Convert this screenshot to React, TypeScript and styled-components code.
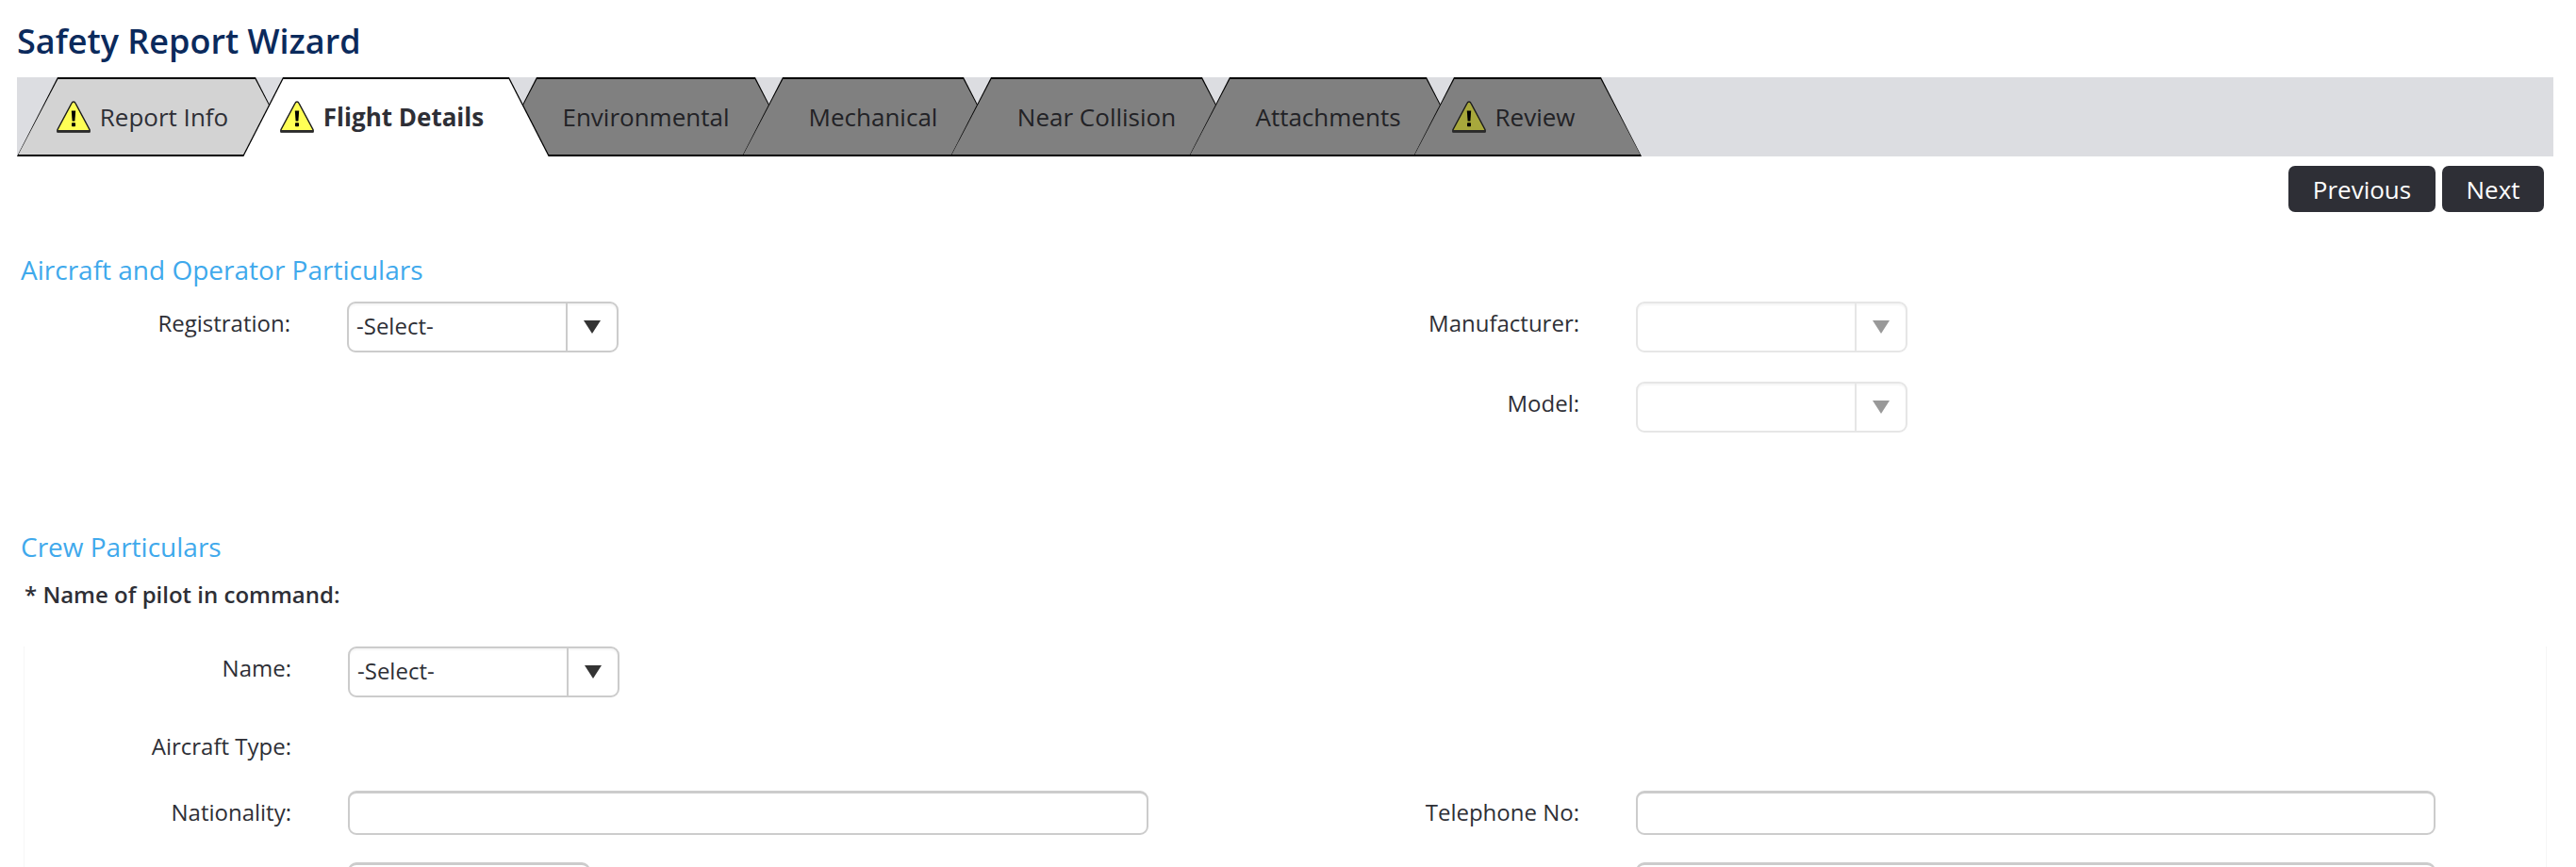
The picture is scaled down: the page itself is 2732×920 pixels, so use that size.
import React from 'react';
import styled, { createGlobalStyle } from 'styled-components';

const GlobalStyle = createGlobalStyle`
  html, body {
    margin: 0;
    height: 920px;
    overflow: hidden;
    background: #fff;
  }

  body {
    font-family: "Open Sans", "Liberation Sans", sans-serif;
    color: #2e2f36;
  }
`;

const Page = styled.div`
  padding: 0 24px 0 18px;
  height: 920px;
  box-sizing: border-box;
  overflow: hidden;
`;

const Title = styled.h1`
  margin: 0;
  height: 82px;
  padding-top: 24px;
  box-sizing: border-box;
  font-size: 36px;
  line-height: 40px;
  font-weight: 600;
  color: #0b2a5c;
`;

const TabBar = styled.div`
  display: flex;
  height: 84px;
  background: #dcdde1;
`;

type TabState = 'done' | 'active' | 'idle';

const tabFill: Record<TabState, string> = {
  done: '#d3d3d3',
  active: '#fff',
  idle: '#808080',
};

const Tab = styled.div<{ $width: number; $state: TabState; $order: number }>`
  position: relative;
  isolation: isolate;
  z-index: ${(p) => (p.$state === 'active' ? 20 : p.$order)};
  flex: none;
  width: ${(p) => p.$width}px;
  height: 84px;
  box-sizing: border-box;
  display: flex;
  align-items: center;
  justify-content: center;
  background: #000;
  clip-path: polygon(43px 0, calc(100% - 43px) 0, 100% 100%, 0 100%);
  font-size: 26px;
  font-weight: ${(p) => (p.$state === 'active' ? 700 : 400)};
  color: ${(p) => (p.$state === 'idle' ? '#222226' : '#2e2f36')};
  white-space: nowrap;

  & + & {
    margin-left: -57px;
  }

  &::before {
    content: '';
    position: absolute;
    z-index: -1;
    left: 0;
    right: 0;
    top: 2px;
    bottom: ${(p) => (p.$state === 'active' ? 0 : 2)}px;
    background: ${(p) => tabFill[p.$state]};
    clip-path: polygon(43.4px 0, calc(100% - 43.4px) 0, calc(100% - 1.4px) 100%, 1.4px 100%);
  }
`;

const TabInner = styled.span<{ $shift: boolean }>`
  display: flex;
  align-items: center;
  gap: 10px;
  padding-right: ${(p) => (p.$shift ? 30 : 0)}px;
`;

const ButtonRow = styled.div`
  display: flex;
  justify-content: flex-end;
  gap: 7px;
  padding: 10px 10px 0 0;
`;

const NavButton = styled.button<{ $width: number }>`
  height: 49px;
  padding: 0;
  width: ${(p) => p.$width}px;
  border: none;
  border-radius: 7px;
  background: #2e2f36;
  color: #fff;
  font-family: inherit;
  font-size: 26px;
`;

const SectionTitle = styled.h2<{ $top: number }>`
  margin: ${(p) => p.$top}px 0 0 4px;
  font-size: 28px;
  line-height: 36px;
  font-weight: 400;
  color: #3fa9ec;
`;

const SubHeading = styled.div`
  margin: 15px 0 0 8px;
  font-size: 24px;
  line-height: 36px;
  font-weight: 600;
`;

const FormGrid = styled.div<{ $top: number; $framed?: boolean }>`
  display: grid;
  grid-template-columns: 343px 849px ${(p) => (p.$framed ? 517 : 518)}px 848px;
  row-gap: ${(p) => (p.$framed ? 29 : 31)}px;
  margin: ${(p) => p.$top}px 0 0 ${(p) => (p.$framed ? 7 : 6)}px;
  width: 2674px;
  border-left: 1px solid ${(p) => (p.$framed ? '#f6f6f6' : 'transparent')};
  border-right: 1px solid ${(p) => (p.$framed ? '#f6f6f6' : 'transparent')};
`;

const Label = styled.label`
  padding: 5px 60px 0 0;
  font-size: 24px;
  line-height: 36px;
  text-align: right;
`;

const SelectBox = styled.div<{ $disabled?: boolean }>`
  display: flex;
  width: 288px;
  height: 54px;
  box-sizing: border-box;
  border: 2px solid ${(p) => (p.$disabled ? '#e6e6e6' : '#ccc')};
  border-radius: 9px;
  box-shadow: inset 0 2px 2px rgba(0, 0, 0, 0.04);
  background: #fff;
`;

const SelectValue = styled.div`
  flex: 1;
  padding: 6px 0 0 8px;
  font-size: 24px;
  line-height: 36px;
  color: #2e2f36;
`;

const SelectArrow = styled.div<{ $disabled?: boolean }>`
  flex: none;
  width: 52px;
  display: flex;
  align-items: center;
  justify-content: center;
  border-left: 2px solid ${(p) => (p.$disabled ? '#e6e6e6' : '#ccc')};
  color: ${(p) => (p.$disabled ? '#999' : '#333')};
`;

const TextInput = styled.input<{ $width?: number }>`
  display: block;
  width: ${(p) => p.$width ?? 849}px;
  height: 47px;
  box-sizing: border-box;
  padding: 0 8px;
  border: 2px solid #ccc;
  border-top-width: 3px;
  border-radius: 9px;
  background: #fff;
  outline: none;
`;

const WarningIcon: React.FC<{ dim: boolean }> = ({ dim }) => (
  <svg width="36" height="34" viewBox="0 0 36 34" style={{ flex: 'none' }}>
    <path
      d="M18 1c1 0 1.6.6 2 1.5l15 28v2H1v-2l15-28c.4-.9 1-1.5 2-1.5z"
      fill={dim ? '#a8a83c' : '#ffff55'}
      stroke="#1c1c1c"
      strokeWidth="1.5"
      strokeLinejoin="round"
    />
    <rect x="0.4" y="31" width="35.2" height="2.8" fill="#2a2a2a" />
    <path d="M15.8 10.5h4.4l-.8 11h-2.8z" fill="#000" />
    <rect x="16" y="23.2" width="4" height="4" rx="0.8" fill="#000" />
  </svg>
);

const Caret: React.FC = () => (
  <svg width="18" height="14" viewBox="0 0 18 14">
    <path d="M0 0h18L9 14z" fill="currentColor" />
  </svg>
);

const Select: React.FC<{ value?: string; disabled?: boolean }> = ({ value, disabled }) => (
  <SelectBox $disabled={disabled}>
    <SelectValue>{value}</SelectValue>
    <SelectArrow $disabled={disabled}>
      <Caret />
    </SelectArrow>
  </SelectBox>
);

const tabs: { label: string; width: number; state: TabState; warn: boolean; dim?: boolean }[] = [
  { label: 'Report Info', width: 296, state: 'done', warn: true },
  { label: 'Flight Details', width: 326, state: 'active', warn: true },
  { label: 'Environmental', width: 318, state: 'idle', warn: false },
  { label: 'Mechanical', width: 278, state: 'idle', warn: false },
  { label: 'Near Collision', width: 310, state: 'idle', warn: false },
  { label: 'Attachments', width: 295, state: 'idle', warn: false },
  { label: 'Review', width: 242, state: 'idle', warn: true, dim: true },
];

const App: React.FC = () => {
  return (
    <Page>
      <GlobalStyle />
      <Title>Safety Report Wizard</Title>

      <TabBar>
        {tabs.map((tab, i) => (
          <Tab key={tab.label} $width={tab.width} $state={tab.state} $order={i + 1}>
            <TabInner $shift={tab.warn}>
              {tab.warn && <WarningIcon dim={!!tab.dim} />}
              <span>{tab.label}</span>
            </TabInner>
          </Tab>
        ))}
      </TabBar>

      <ButtonRow>
        <NavButton $width={156}>Previous</NavButton>
        <NavButton $width={108}>Next</NavButton>
      </ButtonRow>

      <SectionTitle $top={43}>Aircraft and Operator Particulars</SectionTitle>
      <FormGrid $top={16}>
        <Label>Registration:</Label>
        <Select value="-Select-" />
        <Label>Manufacturer:</Label>
        <Select disabled />
        <span />
        <span />
        <Label>Model:</Label>
        <Select disabled />
      </FormGrid>

      <SectionTitle $top={103}>Crew Particulars</SectionTitle>
      <SubHeading>* Name of pilot in command:</SubHeading>
      <FormGrid $top={37} $framed>
        <Label>Name:</Label>
        <Select value="-Select-" />
        <span />
        <span />
        <Label>Aircraft Type:</Label>
        <span />
        <span />
        <span />
        <Label>Nationality:</Label>
        <TextInput />
        <Label>Telephone No:</Label>
        <TextInput $width={848} />
        <span />
        <TextInput $width={257} />
        <span />
        <TextInput $width={848} />
      </FormGrid>
    </Page>
  );
};

export default App;
